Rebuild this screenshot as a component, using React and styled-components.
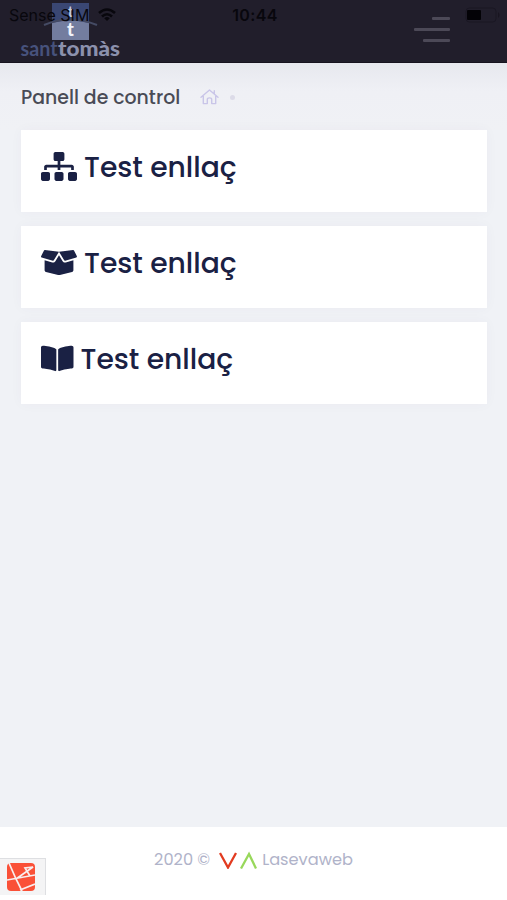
import React from "react";
import styled, { createGlobalStyle } from "styled-components";
import { FaSitemap, FaBoxOpen, FaBookOpen } from "react-icons/fa";

const GlobalStyle = createGlobalStyle`
  * { box-sizing: border-box; }
  body { margin: 0; background: #fff; font-family: Poppins, Inter, sans-serif; }
  svg { display: block; flex: none; }
`;

const Page = styled.div`
  display: flex;
  flex-direction: column;
  height: 900px;
  overflow: hidden;
  position: relative;
  background: #f0f2f6;
`;

const Header = styled.header`
  height: 63px;
  flex: none;
  display: flex;
  justify-content: space-between;
  padding: 3px 57px 0 20px;
  background: #211e2b;
  border-bottom: 1px solid #17131f;
`;

const Brand = styled.div`
  width: 101px;
`;

const MenuButton = styled.div`
  display: flex;
  flex-direction: column;
  align-items: flex-end;
  gap: 8px;
  padding-top: 14px;
`;

const MenuLine = styled.span`
  width: ${(p) => p.$width}px;
  height: 3px;
  border-radius: 1px;
  background: #4c4957;
`;

const StatusBar = styled.div`
  position: absolute;
  inset: 0 0 auto 0;
  height: 30px;
  display: grid;
  grid-template-columns: 1fr auto 1fr;
  align-items: center;
  padding: 0 6px 0 9px;
  color: #08070d;
  font-family: Inter, sans-serif;
  font-size: 16px;
`;

const Carrier = styled.div`
  display: flex;
  align-items: center;
  gap: 9px;
`;

const Clock = styled.div`
  font-weight: 600;
  letter-spacing: 0.4px;
`;

const BatterySlot = styled.div`
  justify-self: end;
`;

const Subheader = styled.div`
  height: 67px;
  flex: none;
  display: flex;
  align-items: center;
  background: linear-gradient(#e7e8ee, #eff0f5 28px, #f0f1f5);
  padding: 1px 21px 0;
`;

const Title = styled.h1`
  margin: 0 20px 0 0;
  padding-top: 2px;
  width: 159px;
  color: #494b56;
  font-size: 18.9px;
  font-weight: 500;
  line-height: 28px;
  white-space: nowrap;
`;

const Dot = styled.span`
  width: 5px;
  height: 5px;
  margin-left: 11px;
  border-radius: 50%;
  background: #dcdbe8;
`;

const CardList = styled.main`
  flex: 1;
  display: flex;
  flex-direction: column;
  gap: 14px;
  padding: 0 20px 0 21px;
`;

const Card = styled.a`
  height: 82px;
  display: flex;
  align-items: flex-start;
  gap: 7px;
  padding: 22px 20px 0;
  background: #fff;
  color: #1a2144;
  box-shadow: 0 0 12px rgba(82, 63, 105, 0.035);
`;

const CardLabel = styled.span`
  font-size: 28.2px;
  font-weight: 500;
  line-height: 30px;
  white-space: nowrap;
`;

const Footer = styled.footer`
  height: 73px;
  flex: none;
  display: flex;
  justify-content: center;
  align-items: center;
  padding-bottom: 8px;
  background: #fff;
  color: #b0b3c9;
  font-size: 16.2px;
  line-height: 24px;
`;

const Copyright = styled.span`
  margin-right: 9px;
`;

const Company = styled.span`
  margin-left: 5px;
`;

const DebugBadge = styled.div`
  position: absolute;
  left: 0;
  top: 858px;
  width: 46px;
  height: 37px;
  padding: 4px 0 0 7px;
  background: #f4f4f5;
  border: solid #dedfe2;
  border-width: 1px 1px 0 0;
`;

function Logo() {
  return (
    <svg width="101" height="59" viewBox="0 0 101 59">
      <path d="M32 0h37v22H32z" fill="#3a4773" />
      <path d="M32 20q18-5 37 0v17H32z" fill="#737d9f" />
      <path d="M24 22Q50 11 77 22" fill="none" stroke="#454b64" strokeWidth="2" />
      <text x="50.5" y="14" textAnchor="middle" fill="#c7cce0" fontFamily="Lato" fontWeight="700" fontSize="15">t</text>
      <text x="50.5" y="33" textAnchor="middle" fill="#f1f3fa" fontFamily="Lato" fontWeight="900" fontSize="18">t</text>
      <text x="0.5" y="52.6" fill="#47527c" fontFamily="Lato" fontWeight="700" fontSize="20" textLength="37" lengthAdjust="spacingAndGlyphs">sant</text>
      <text x="38" y="52.6" fill="#8c91ad" fontFamily="Lato" fontWeight="900" fontSize="20" textLength="62" lengthAdjust="spacingAndGlyphs">tomàs</text>
    </svg>
  );
}

function Wifi() {
  return (
    <svg width="18" height="14" viewBox="0 0 18 14" fill="none" stroke="#08070d" strokeWidth="2.6">
      <path d="M1 5Q9-2 17 5M4 8.5Q9 4 14 8.5" />
      <path d="M9 13L6.2 10.2Q9 8 11.8 10.2z" fill="#08070d" stroke="none" />
    </svg>
  );
}

function Battery() {
  return (
    <svg width="36" height="16" viewBox="0 0 36 16">
      <rect x="1" y="1" width="30" height="14" rx="3.5" fill="none" stroke="#1a1723" />
      <rect x="2" y="3" width="14" height="10" rx="1" fill="#030206" />
      <path d="M33 5q3 3 0 6z" fill="#181520" />
    </svg>
  );
}

function HomeIcon() {
  return (
    <svg width="19" height="16" viewBox="0 0 19 16" fill="none" stroke="#c9c5e8" strokeWidth="1.4" strokeLinecap="round" strokeLinejoin="round">
      <path d="M1 8.2L9.5 1L18 8.2M14.3 4.8V1.8M3.3 7v7.6h4v-4.2q0-1.5 2.2-1.5t2.2 1.5v4.2h4V7" />
    </svg>
  );
}

function VaMark() {
  return (
    <svg width="38" height="18" viewBox="0 0 38 18" fill="none" strokeWidth="2.3">
      <path d="M1 2l8 14.5L17 2" stroke="#e23b20" />
      <path d="M22 17.5l8-14.5L37 17.5" stroke="#98d85b" />
    </svg>
  );
}

function DebugIcon() {
  return (
    <svg width="28" height="28" viewBox="0 0 28 28">
      <rect width="28" height="28" rx="4" fill="#fa5037" />
      <path d="M2 0L9 16L15 28M0 17L28 12M9 16L26 4L18 5L23 13M13 27L28 21" fill="none" stroke="#f8eeee" strokeWidth="1.7" />
    </svg>
  );
}

const links = [
  { label: "Test enllaç", Icon: FaSitemap, width: 36 },
  { label: "Test enllaç", Icon: FaBoxOpen, width: 36 },
  { label: "Test enllaç", Icon: FaBookOpen, width: 32.5 },
];

export default function App() {
  return (
    <Page>
      <GlobalStyle />
      <Header>
        <Brand><Logo /></Brand>
        <MenuButton>
          <MenuLine $width={18} />
          <MenuLine $width={36} />
          <MenuLine $width={27} />
        </MenuButton>
      </Header>
      <StatusBar>
        <Carrier>Sense SIM <Wifi /></Carrier>
        <Clock>10:44</Clock>
        <BatterySlot><Battery /></BatterySlot>
      </StatusBar>
      <Subheader>
        <Title>Panell de control</Title>
        <HomeIcon />
        <Dot />
      </Subheader>
      <CardList>
        {links.map(({ label, Icon, width }, i) => (
          <Card key={i}>
            <Icon style={{ width, height: 29 }} />
            <CardLabel>{label}</CardLabel>
          </Card>
        ))}
      </CardList>
      <Footer>
        <Copyright>2020 ©</Copyright>
        <VaMark />
        <Company>Lasevaweb</Company>
      </Footer>
      <DebugBadge><DebugIcon /></DebugBadge>
    </Page>
  );
}
